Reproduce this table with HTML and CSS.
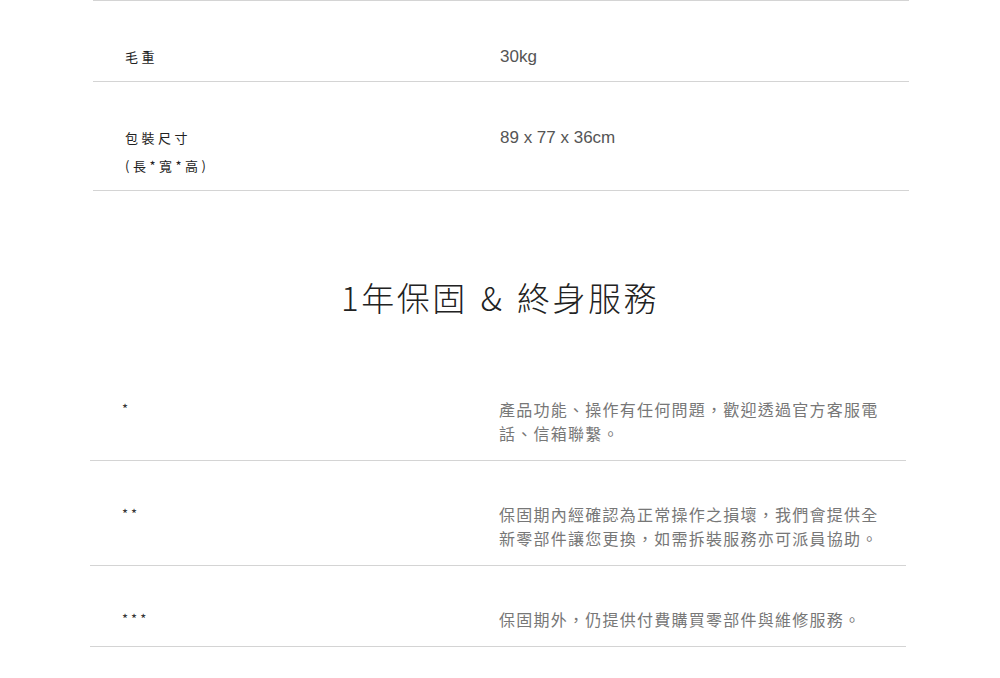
FILE: index.html
```html
<!DOCTYPE html>
<html lang="zh-Hant">
<head>
    <meta charset="UTF-8">
    <meta name="viewport" content="width=device-width, initial-scale=1.0">
    <title>規格與保固</title>
    <link rel="stylesheet" href="styles.css">
</head>
<body>

<div class="spec-table">
    <div class="spec-row">
        <div class="spec-label">毛重</div>
        <div class="spec-value">30kg</div>
    </div>
    <div class="spec-row">
        <div class="spec-label">包裝尺寸<br>(長*寬*高)</div>
        <div class="spec-value">89 x 77 x 36cm</div>
    </div>
</div>

<h2 class="section-title">1年保固 &amp; 終身服務</h2>

<div class="warranty-table">
    <div class="warranty-row">
        <div class="warranty-mark">*</div>
        <div class="warranty-text">產品功能、操作有任何問題，歡迎透過官方客服電話、信箱聯繫。</div>
    </div>
    <div class="warranty-row">
        <div class="warranty-mark">**</div>
        <div class="warranty-text">保固期內經確認為正常操作之損壞，我們會提供全新零部件讓您更換，如需拆裝服務亦可派員協助。</div>
    </div>
    <div class="warranty-row">
        <div class="warranty-mark">***</div>
        <div class="warranty-text">保固期外，仍提供付費購買零部件與維修服務。</div>
    </div>
</div>

</body>
</html>
```

FILE: styles.css
```css
/* Page */
body {
    margin: 0;
    background: #fff;
    font-family: "Noto Sans CJK TC", "Liberation Sans", sans-serif;
    color: #222;
}

/* Spec table */
.spec-table {
    width: 816px;
    margin-left: 93px;
}

.spec-row {
    display: grid;
    grid-template-columns: 375px 1fr;
    padding: 42px 0 10px 32px;
    border-top: 1px solid #d4d4d4;
    line-height: 28px;
}

.spec-row:last-child {
    border-bottom: 1px solid #d4d4d4;
}

.spec-label {
    font-size: 13px;
    letter-spacing: 3.5px;
    color: #222;
}

.spec-value {
    font-family: "Liberation Sans", Arial, sans-serif;
    font-size: 17px;
    color: #555;
}

/* Heading */
.section-title {
    margin: 86px 0 39px;
    text-align: center;
    font-size: 33px;
    font-weight: 300;
    line-height: 40px;
    letter-spacing: 2.5px;
    word-spacing: 3px;
    color: #222;
}

/* Warranty list */
.warranty-table {
    width: 816px;
    margin-left: 90px;
}

.warranty-row {
    display: grid;
    grid-template-columns: 377px 384px;
    padding: 41px 0 15px 32px;
    border-bottom: 1px solid #d4d4d4;
    line-height: 24px;
}

.warranty-mark {
    font-size: 13px;
    letter-spacing: 3px;
    color: #333;
}

.warranty-text {
    font-size: 16px;
    letter-spacing: 1.25px;
    color: #777;
}
```
